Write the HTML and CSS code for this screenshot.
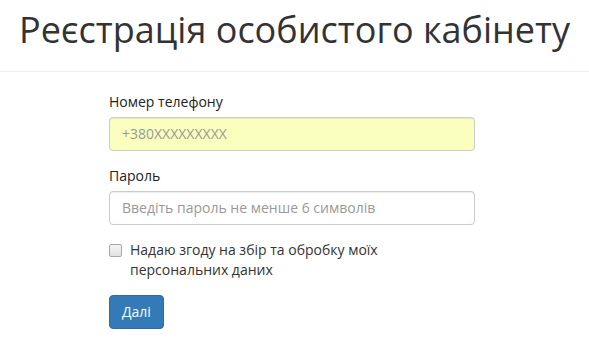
FILE: index.html
```html
<!DOCTYPE html>
<html lang="uk">
<head>
<meta charset="utf-8">
<title>Реєстрація особистого кабінету</title>
<link rel="stylesheet" href="styles.css">
</head>
<body>
<header class="page-header">
  <h1 class="title">Реєстрація особистого кабінету</h1>
</header>
<main class="main">
  <form class="form">
    <div class="form-group">
      <label class="label" for="phone">Номер телефону</label>
      <input class="input input-autofill" id="phone" type="text" placeholder="+380XXXXXXXXX">
    </div>
    <div class="form-group">
      <label class="label" for="pass">Пароль</label>
      <input class="input" id="pass" type="password" placeholder="Введіть пароль не менше 6 символів">
    </div>
    <div class="checkbox">
      <label class="check-label">
        <input class="check" type="checkbox">
        <span class="check-text">Надаю згоду на збір та обробку моїх персональних даних</span>
      </label>
    </div>
    <button class="btn" type="button">Далі</button>
  </form>
</main>
</body>
</html>
```
FILE: styles.css
```css
* { box-sizing: border-box; }
html, body { margin: 0; padding: 0; background: #fff; }
body {
  font-family: "Open Sans", "Noto Sans", sans-serif;
  font-size: 14px;
  line-height: 20px;
  color: #333;
}
.page-header {
  padding: 10px 0 21px;
  border-bottom: 1px solid #eee;
}
.title {
  margin: 0;
  text-align: center;
  font-size: 36px;
  font-weight: 400;
  line-height: 1.1;
  color: #333;
}
.main {
  padding: 20px 0 0 109px;
}
.form {
  width: 366px;
}
.form-group {
  margin-bottom: 15px;
}
.label {
  display: block;
  margin-bottom: 5px;
  color: #222;
  font-weight: 400;
}
.input {
  display: block;
  width: 100%;
  height: 34px;
  padding: 6px 12px;
  font-family: inherit;
  font-size: 14px;
  line-height: 20px;
  color: #555;
  background: #fff;
  border: 1px solid #ccc;
  border-radius: 4px;
  box-shadow: inset 0 1px 1px rgba(0,0,0,.075);
  outline: none;
}
.input::placeholder { color: #999; }
.input-autofill { background: #faffbd; }
.checkbox {
  margin: 0 0 15px;
}
.check-label {
  display: flex;
  align-items: flex-start;
  gap: 8px;
  cursor: pointer;
}
.check {
  appearance: none;
  -webkit-appearance: none;
  flex: none;
  width: 13px;
  height: 13px;
  margin: 4px 0 0;
  border: 1px solid #a8a8a8;
  border-radius: 2px;
  background: linear-gradient(#f4f4f4, #e2e2e2);
}
.check-text {
  max-width: 260px;
}
.btn {
  display: block;
  height: 34px;
  padding: 6px 12px;
  font-family: inherit;
  font-size: 14px;
  line-height: 20px;
  color: #fff;
  background: #337ab7;
  border: 1px solid #2e6da4;
  border-radius: 4px;
  cursor: pointer;
}
```
